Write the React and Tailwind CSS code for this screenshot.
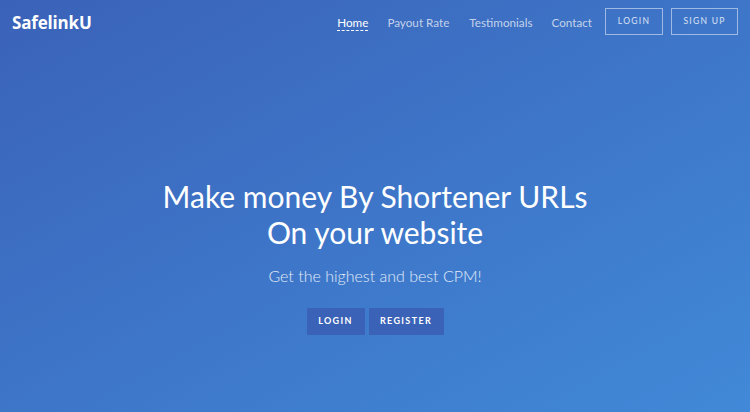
export default function App() {
  const f = { fontFamily: 'Lato, "Noto Sans", sans-serif' };
  return (
    <div style={f} className="w-[750px] h-[412px] bg-gradient-to-br from-[#3a62b8] to-[#4189d8] text-white flex flex-col">
      <header className="flex items-start justify-between pl-3 pr-3 pt-[8px] h-[40px]">
        <div style={{ fontFamily: '"Open Sans", sans-serif' }} className="text-[17px] font-bold leading-[27px] mt-[1px] tracking-[-0.01em]">SafelinkU</div>
        <nav className="flex items-center text-[11.7px] h-[27px]">
          <a className="text-white border-b border-dashed border-white leading-[15px] mr-[19px] mt-[3px]">Home</a>
          <a className="text-white/70 mr-[20px] mt-[2px]">Payout Rate</a>
          <a className="text-white/70 mr-[19px] mt-[2px]">Testimonials</a>
          <a className="text-white/70 mr-[13px] mt-[2px]">Contact</a>
          <button className="w-[58px] h-[27px] border border-white/50 text-[8.5px] tracking-[0.15em] text-white/80 mr-[8px]">LOGIN</button>
          <button className="w-[67px] h-[27px] border border-white/50 text-[8.5px] tracking-[0.15em] text-white/80">SIGN UP</button>
        </nav>
      </header>
      <main className="flex-1 flex flex-col items-center justify-center pb-[12px]">
        <h1 className="text-[30px] leading-[36px] text-center font-normal mt-[72px]">Make money By Shortener URLs<br />On your website</h1>
        <p className="text-[16px] font-light text-white/85 mt-[14px]">Get the highest and best CPM!</p>
        <div className="flex gap-[4px] mt-[20px]">
          <button className="w-[58px] h-[27px] bg-[#3a62b6] text-[9px] font-bold tracking-[0.15em]">LOGIN</button>
          <button className="w-[75px] h-[27px] bg-[#3a62b6] text-[9px] font-bold tracking-[0.15em]">REGISTER</button>
        </div>
      </main>
    </div>
  );
}
